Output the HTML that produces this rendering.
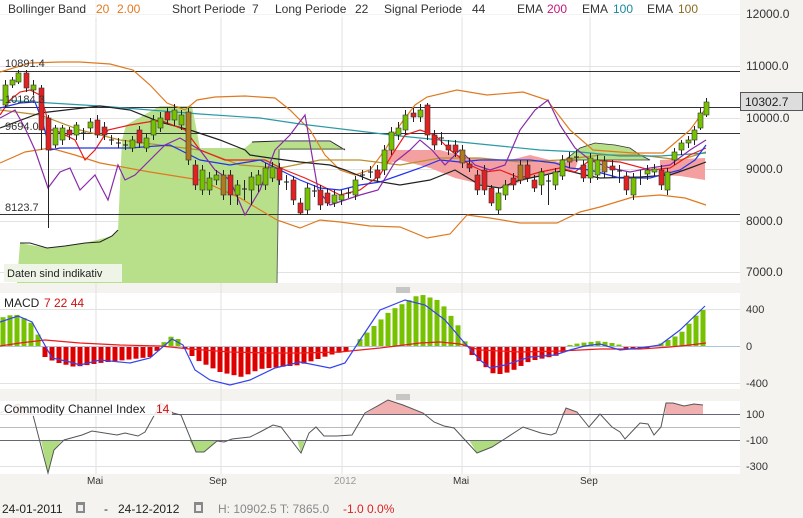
<!DOCTYPE html>
<html><head><meta charset="utf-8"><style>
html,body{margin:0;padding:0;background:#f4f3f0;}
body{width:803px;height:518px;overflow:hidden;position:relative;font-family:"Liberation Sans",sans-serif;}
svg{position:absolute;left:0;top:0;}
</style></head><body>
<svg id="s" width="803" height="518" viewBox="0 0 803 518" font-family="Liberation Sans, sans-serif">
<rect x="0" y="0" width="803" height="518" fill="#f4f3f0"/>
<rect x="0" y="0" width="740" height="283" fill="#fff"/>
<rect x="0" y="293" width="740" height="96" fill="#fff"/>
<rect x="0" y="401" width="740" height="73" fill="#fff"/>
<g stroke="#e2e2e2" stroke-width="1">
<line x1="96" y1="0" x2="96" y2="474"/><line x1="221" y1="0" x2="221" y2="474"/><line x1="342" y1="0" x2="342" y2="474"/><line x1="462" y1="0" x2="462" y2="474"/><line x1="590" y1="0" x2="590" y2="474"/>
<line x1="0" y1="14.5" x2="740" y2="14.5"/><line x1="0" y1="66.5" x2="740" y2="66.5"/><line x1="0" y1="118.5" x2="740" y2="118.5"/><line x1="0" y1="169.5" x2="740" y2="169.5"/><line x1="0" y1="221.5" x2="740" y2="221.5"/><line x1="0" y1="272.5" x2="740" y2="272.5"/>
<line x1="0" y1="309.5" x2="740" y2="309.5"/><line x1="0" y1="383.5" x2="740" y2="383.5"/>
<line x1="0" y1="466.5" x2="740" y2="466.5"/>
</g>
<line x1="0" y1="346.5" x2="740" y2="346.5" stroke="#b0c4d8"/>
<line x1="0" y1="427.5" x2="740" y2="427.5" stroke="#bbb"/>
<polygon fill="#b8e08a" points="17,283 20,243 47,248 85,243 112,236 118,230 122,140 126,125 160,106 192,106 200,148 245,148 252,142 300,142 330,142 345,150 280,150 277,283"/>
<polyline fill="none" stroke="#222" points="20,243 30,243 47,248 65,246 85,243 100,242 112,236 118,230"/>
<polyline fill="none" stroke="#222" points="252,142 280,141 300,141 330,141 345,150"/>
<line x1="280" y1="149" x2="345" y2="149" stroke="#666"/>
<line x1="279" y1="149" x2="277" y2="283" stroke="#666"/>
<polygon fill="#f5a0a0" points="385,150 440,150 470,158 500,160 510,160 530,155 550,160 565,163 580,155 575,170 540,175 520,182 505,188 485,185 455,178 430,168 400,160 385,165"/>
<polygon fill="#f5a0a0" points="660,160 705,158 705,180 680,176 660,175"/>
<polygon fill="#b8e08a" stroke="#333" stroke-width="0.8" points="565,160 580,148 595,143 615,145 630,148 640,155 650,160 600,160"/>
<g stroke="#333" stroke-width="1">
<line x1="0" y1="71.5" x2="740" y2="71.5"/><line x1="0" y1="107.5" x2="740" y2="107.5"/><line x1="0" y1="133.5" x2="740" y2="133.5"/><line x1="0" y1="214.5" x2="740" y2="214.5"/>
</g>
<g fill="none" stroke-width="1.2">
<polyline stroke="#e07a20" points="0,72 30,63 60,62 80,62 110,64 133,70 150,85 167,103 185,110 197,100 215,97 245,96 275,98 290,110 310,130 325,155 340,170 355,175 370,170 385,150 400,125 415,105 427,97 457,90 487,95 523,92 547,100 570,130 593,150 633,153 663,153 690,130 706,108"/>
<polyline stroke="#e07a20" points="0,163 25,152 50,148 75,155 100,163 150,172 200,180 240,198 277,220 300,228 320,220 340,222 370,226 400,227 427,238 450,234 467,215 490,218 520,223 557,223 580,212 600,207 633,197 660,195 685,198 706,205"/>
<polyline stroke="#b8902a" points="0,110 40,115 80,130 120,140 160,145 200,150 240,165 280,168 320,160 360,160 400,165 440,158 480,158 520,162 560,160 600,155 640,155 680,160 706,152"/>
<polyline stroke="#2a9aa6" points="0,100 50,103 100,106 150,110 200,114 260,118 300,124 350,130 400,136 450,141 500,146 540,150 580,152 620,156 660,156 706,153"/>
<polyline stroke="#222" points="0,128 40,113 100,106 130,110 160,122 190,130 220,140 245,150 250,155 270,158 300,162 330,165 345,170 370,180 400,185 430,180 455,170 480,185 500,188 520,180 545,175 565,170 585,175 600,178 640,177 670,175 690,168 706,162"/>
<polyline stroke="#ee1a1a" points="0,115 10,100 20,92 30,90 40,95 45,110 50,130 55,130 75,140 85,160 95,150 108,130 130,125 160,120 185,130 200,150 225,160 245,160 265,160 285,170 305,178 320,185 340,195 360,190 380,175 392,155 405,135 420,130 435,135 450,150 470,165 485,172 500,170 520,178 540,172 560,168 575,172 590,160 620,162 650,170 670,168 690,155 706,148"/>
<polyline stroke="#2233ee" points="0,108 20,103 35,102 42,120 50,150 60,148 90,148 130,148 170,145 200,160 230,165 260,160 280,170 300,180 320,188 340,190 360,185 380,182 400,175 420,168 440,160 460,162 480,160 500,160 530,160 555,163 570,168 590,170 620,178 650,178 680,170 695,160 706,145"/>
<polyline stroke="#8a2aa8" points="0,118 15,110 25,128 35,150 48,188 60,172 70,168 80,190 95,175 108,200 118,165 125,180 135,175 150,160 165,145 180,138 200,150 215,170 230,180 245,215 260,190 275,150 290,135 305,115 318,190 330,205 345,200 360,195 378,190 395,162 410,150 420,140 432,150 445,165 460,150 475,165 490,170 505,165 520,130 535,110 548,100 560,125 575,148 590,160 610,168 630,172 650,168 670,165 690,150 706,140"/>
</g>
<g id="candles"></g>
<g font-size="11" fill="#333">
<text x="5" y="67">10891.4</text><text x="5" y="103">10184.3</text><text x="5" y="130">9694.0</text><text x="5" y="211">8123.7</text>
</g>
<rect x="4" y="264" width="118" height="18" fill="#eef5e6"/>
<text x="7" y="277" font-size="11" fill="#222">Daten sind indikativ</text>
<rect x="0" y="0" width="740" height="18" fill="#fff" opacity="0.6"/>
<g font-size="12" fill="#333">
<text x="8" y="13">Bollinger Band</text><text x="96" y="13" fill="#e07a20">20</text><text x="117" y="13" fill="#e07a20">2.00</text>
<text x="172" y="13">Short Periode</text><text x="252" y="13">7</text>
<text x="275" y="13">Long Periode</text><text x="355" y="13">22</text>
<text x="384" y="13">Signal Periode</text><text x="472" y="13">44</text>
<text x="517" y="13">EMA</text><text x="547" y="13" fill="#c0187a">200</text>
<text x="582" y="13">EMA</text><text x="613" y="13" fill="#1a8a9a">100</text>
<text x="647" y="13">EMA</text><text x="678" y="13" fill="#8a6a20">100</text>
</g>
<g font-size="12" fill="#333">
<text x="746" y="18">12000.0</text><text x="746" y="70">11000.0</text><text x="746" y="122">10000.0</text><text x="746" y="173">9000.0</text><text x="746" y="225">8000.0</text><text x="746" y="276">7000.0</text>
</g>
<rect x="740.5" y="92.5" width="62" height="18" fill="#ddd" stroke="#555"/>
<text x="745" y="106" font-size="12" fill="#222">10302.7</text>
<g stroke="#999"><line x1="396" y1="288" x2="410" y2="288"/><line x1="396" y1="290" x2="410" y2="290"/><line x1="396" y1="292" x2="410" y2="292"/>
<line x1="396" y1="395" x2="410" y2="395"/><line x1="396" y1="397" x2="410" y2="397"/><line x1="396" y1="399" x2="410" y2="399"/></g>
<g id="macd"></g>
<g fill="none" stroke-width="1.2">
<polyline stroke="#ee1a1a" points="0,346 20,343 45,340 80,343 120,345 160,346 190,349 230,352 270,353 300,353 340,352 380,348 420,343 440,342 460,344 480,350 520,352 560,351 600,349 640,349 670,347 690,345 706,343"/>
<polyline stroke="#3344ee" points="0,322 18,316 32,322 42,340 52,358 70,362 80,365 100,360 130,363 150,358 165,345 172,339 183,345 195,370 210,380 230,385 250,380 275,368 300,362 330,368 345,363 360,340 380,310 405,300 425,305 445,320 462,340 480,360 490,368 505,365 530,357 555,355 570,350 585,346 600,344 620,350 640,348 660,345 680,330 705,306"/>
</g>
<text x="4" y="307" font-size="12" fill="#222">MACD</text>
<text x="44" y="307" font-size="12" fill="#cc1111">7  22  44</text>
<g font-size="11" fill="#333"><text x="746" y="313">400</text><text x="746" y="350">0</text><text x="746" y="387">-400</text></g>
<!-- CCI fills -->
<g fill="#f0b0b0"><polygon points="12,414 18,404 25,410 30,414"/><polygon points="154,414 161,403 170,411 175,414"/><polygon points="365,414 388,400 403,405 423,413 425,414"/><polygon points="562,414 566,408 577,412 579,414"/><polygon points="665,414 666,403 673,403 684,406 694,404 703,405 703,414"/></g>
<g fill="#b0dc80"><polygon points="41,440 48,473 54,450 62,440"/><polygon points="189,440 196,452 204,452 217,441 219,440"/><polygon points="297,440 301,453 305,440"/><polygon points="469,440 477,453 492,447 503,440"/></g>
<line x1="0" y1="414.5" x2="740" y2="414.5" stroke="#667"/>
<line x1="0" y1="440.5" x2="740" y2="440.5" stroke="#667"/>
<polyline fill="none" stroke="#555" stroke-width="1" points="0,413 18,404 33,415 48,473 54,450 64,440 82,435 92,431 117,435 125,433 138,436 145,432 161,403 173,413 181,415 196,452 204,452 217,441 224,442 232,439 250,437 260,432 273,425 281,427 301,453 309,433 316,427 324,436 337,436 352,435 365,413 388,400 403,405 423,413 434,422 444,426 454,428 477,453 492,447 503,440 523,427 541,433 551,435 556,433 566,408 577,412 589,427 600,414 612,427 620,432 625,439 640,423 648,424 654,435 661,427 666,403 673,403 684,406 694,404 703,405"/>
<rect x="0" y="401" width="172" height="15" fill="#fff" opacity="0.85"/>
<text x="4" y="413" font-size="12" fill="#222">Commodity Channel Index</text><text x="156" y="413" font-size="12" fill="#cc1111">14</text>
<g font-size="11" fill="#333"><text x="746" y="418">100</text><text x="746" y="444">-100</text><text x="746" y="470">-300</text></g>
<g font-size="10" fill="#333"><text x="87" y="484">Mai</text><text x="209" y="484">Sep</text><text x="334" y="484" fill="#999">2012</text><text x="453" y="484">Mai</text><text x="580" y="484">Sep</text></g>
<g font-size="12">
<text x="2" y="513" fill="#222">24-01-2011</text>
<rect x="76" y="502" width="9" height="11" fill="#888"/><rect x="78" y="505" width="5" height="6" fill="#eee"/>
<text x="104" y="513" fill="#222">-</text>
<text x="118" y="513" fill="#222">24-12-2012</text>
<rect x="194" y="502" width="9" height="11" fill="#888"/><rect x="196" y="505" width="5" height="6" fill="#eee"/>
<text x="218" y="513" fill="#888">H: 10902.5  T: 7865.0</text>
<text x="343" y="513" fill="#dd2222">-1.0  0.0%</text>
</g>
</svg>
<script>
var NS="http://www.w3.org/2000/svg";
function el(p,t,a){var e=document.createElementNS(NS,t);for(var k in a)e.setAttribute(k,a[k]);p.appendChild(e);return e;}
var C=[[5,85,105,'g',80,108],[12,80,85,'g',77,88],[18,73,82,'g',70,84],[26,73,88,'r',70,92],[33,85,90,'g',80,95],[41,88,130,'r',85,150],[48,118,150,'r',115,228],[55,128,145,'g',125,148],[62,128,140,'g',125,145],[69,130,135,'r',127,140],[76,125,135,'g',122,140],[83,132,134,'s',128,140],[90,122,128,'g',118,132],[97,120,135,'r',115,138],[104,127,135,'r',122,140],[111,139,141,'s',135,145],[118,142,144,'s',138,148],[125,144,146,'s',140,150],[132,140,148,'g',136,152],[139,130,143,'r',126,148],[146,138,148,'g',134,152],[153,120,135,'g',115,140],[160,118,128,'g',112,132],[167,112,120,'r',108,124],[174,110,120,'g',104,126],[181,115,125,'g',110,130],[188,112,160,'b',108,165],[195,165,185,'r',160,190],[202,170,190,'g',165,195],[209,178,190,'g',172,195],[216,175,180,'g',170,185],[223,175,195,'b',170,200],[230,175,195,'r',170,205],[237,185,195,'g',180,205],[244,188,190,'s',180,200],[251,177,190,'g',172,205],[258,175,185,'g',170,192],[265,168,185,'g',163,190],[272,167,178,'g',162,182],[279,168,180,'r',163,185],[286,181,183,'s',175,190],[293,180,200,'r',176,205],[300,203,213,'r',198,215],[307,188,210,'g',183,215],[314,190,192,'s',185,197],[320,190,205,'r',185,210],[327,193,203,'r',188,206],[334,195,203,'g',190,207],[341,195,200,'g',190,205],[348,192,194,'s',188,198],[355,180,195,'g',176,200],[362,174,176,'s',170,180],[370,171,173,'s',166,178],[377,170,178,'r',165,182],[384,150,170,'g',145,175],[391,132,150,'g',127,155],[398,128,135,'g',122,140],[405,115,130,'g',110,135],[413,113,117,'r',108,122],[420,110,117,'g',104,122],[427,105,135,'r',103,140],[434,135,145,'r',130,150],[441,137,139,'s',132,145],[448,145,150,'r',140,155],[455,145,152,'r',140,157],[462,150,163,'b',145,168],[469,164,168,'r',158,172],[477,175,190,'r',170,195],[484,170,190,'r',165,195],[491,188,203,'r',185,206],[498,193,210,'g',188,214],[505,185,195,'g',180,200],[513,178,185,'r',173,190],[520,165,180,'b',160,184],[527,165,178,'r',160,182],[534,180,188,'r',175,192],[541,172,185,'g',168,195],[548,180,182,'s',175,205],[555,172,185,'g',168,190],[562,160,176,'g',155,180],[569,158,162,'b',152,168],[576,156,158,'s',150,162],[583,165,178,'r',160,182],[590,158,178,'g',153,183],[597,160,175,'g',155,180],[604,161,172,'b',156,178],[612,166,170,'r',160,178],[619,170,172,'s',165,183],[626,176,190,'r',172,195],[633,178,195,'g',173,200],[640,176,178,'s',170,185],[647,170,174,'g',165,180],[654,169,172,'g',164,176],[661,170,185,'r',165,190],[667,172,190,'g',168,195],[674,152,160,'g',148,165],[681,143,150,'g',140,155],[688,140,143,'g',136,148],[694,130,140,'g',126,145],[700,113,128,'g',108,130],[706,102,115,'g',98,117]];
var g=document.getElementById('candles');
var col={g:'#77c200',r:'#e22222',b:'#b07a20',s:'#222'};
C.forEach(function(c){
 el(g,'line',{x1:c[0]+0.5,x2:c[0]+0.5,y1:c[4],y2:c[5],stroke:'#222','stroke-width':1});
 if(c[3]=='s'){el(g,'line',{x1:c[0]-2,x2:c[0]+3,y1:c[1]+1,y2:c[1]+1,stroke:'#222'});}
 else el(g,'rect',{x:c[0]-2,y:c[1],width:5,height:Math.max(2,c[2]-c[1]),fill:col[c[3]],stroke:'#333','stroke-width':0.6});
});
var K=[[0,28],[15,32],[30,25],[40,8],[45,-10],[55,-15],[75,-20],[100,-16],[150,-10],[158,-3],[165,5],[172,10],[180,6],[186,-3],[195,-12],[220,-25],[242,-30],[260,-22],[300,-18],[330,-8],[350,-3],[358,5],[390,35],[420,52],[440,45],[460,18],[466,2],[472,-8],[495,-28],[510,-25],[530,-14],[560,-8],[570,1],[580,3],[600,5],[618,2],[625,-2],[650,-1],[658,1],[680,12],[700,35],[706,37]];
function iv(x){for(var i=1;i<K.length;i++){if(x<=K[i][0]){var a=K[i-1],b=K[i];return a[1]+(b[1]-a[1])*(x-a[0])/(b[0]-a[0]);}}return 0;}
var m=document.getElementById('macd');
for(var x=3;x<=706;x+=7){var v=iv(x);if(Math.abs(v)<1)continue;
 el(m,'rect',{x:x-2.5,y:v>0?346-v:347,width:5,height:Math.abs(v),fill:v>0?'#77c200':'#dd0000'});}
</script>
</body></html>
